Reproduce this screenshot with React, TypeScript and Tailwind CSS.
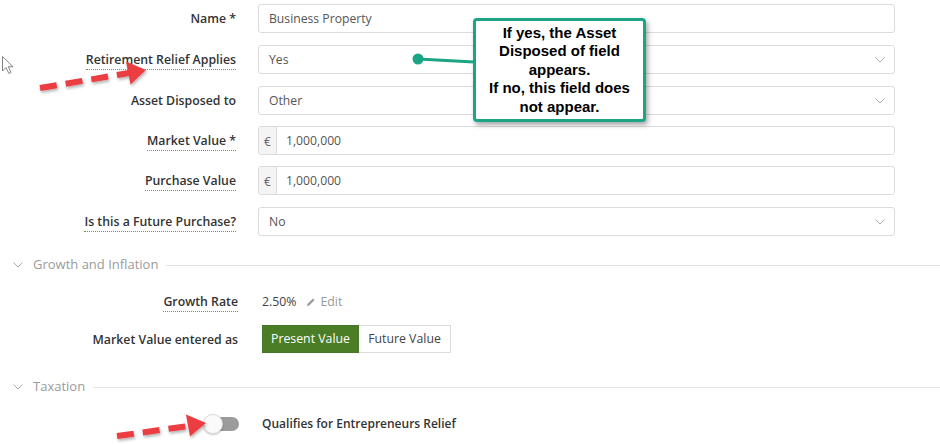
import React from "react";

const Chevron = ({ className = "" }: { className?: string }) => (
  <svg width="10" height="6" viewBox="0 0 10 6" className={className}>
    <path d="M0.5 0.5 L5 5 L9.5 0.5" fill="none" stroke="currentColor" strokeWidth="1" />
  </svg>
);

const Label = ({ text, dotted, w = "w-[236px]" }: { text: string; dotted?: boolean; w?: string }) => (
  <div className={`${w} shrink-0 text-right text-[12.3px] font-semibold text-[#333] pt-[2px]`}>
    <span className={dotted ? "border-b border-dotted border-[#6f9d3c] pb-[1px]" : ""}>{text}</span>
  </div>
);

const TextBox = ({ value }: { value: string }) => (
  <div className="ml-[22px] w-[637px] h-[29px] border border-[#dcdcdc] rounded-[3px] flex items-center px-[10px] pt-[2px] text-[12.2px] text-[#555]">
    {value}
  </div>
);

const SelectBox = ({ value }: { value: string }) => (
  <div className="ml-[22px] w-[637px] h-[29px] border border-[#dcdcdc] rounded-[3px] flex items-center justify-between pl-[10px] pr-[9px] text-[12.2px] text-[#555]">
    <span className="pt-[2px]">{value}</span>
    <Chevron className="text-[#aaa]" />
  </div>
);

const Money = ({ value }: { value: string }) => (
  <div className="ml-[22px] w-[637px] h-[29px] border border-[#dcdcdc] rounded-[3px] flex items-stretch text-[12.2px] text-[#555] overflow-hidden">
    <div className="w-[18px] bg-[#f4f4f4] border-r border-[#dcdcdc] flex items-center justify-center text-[12px] text-[#666] pt-[2px]">€</div>
    <div className="flex items-center pl-[9px] pt-[2px]">{value}</div>
  </div>
);

const Section = ({ title, cls }: { title: string; cls: string }) => (
  <div className={`flex items-center h-[20px] pl-[13px] ${cls}`}>
    <Chevron className="text-[#aaa]" />
    <span className="ml-[10px] text-[13px] text-[#9b9b9b]">{title}</span>
    <div className="flex-1 ml-[8px] h-px bg-[#e2e2e2]" />
  </div>
);

export default function App() {
  return (
    <div
      className="relative w-[940px] h-[445px] bg-white overflow-hidden"
      style={{ fontFamily: '"Open Sans", sans-serif' }}
    >
      <div className="flex flex-col">
        <div className="flex items-center h-[29px] mt-[4px]">
          <Label text="Name *" />
          <TextBox value="Business Property" />
        </div>
        <div className="flex items-center h-[29px] mt-[12px]">
          <Label text="Retirement Relief Applies" dotted />
          <SelectBox value="Yes" />
        </div>
        <div className="flex items-center h-[29px] mt-[12px]">
          <Label text="Asset Disposed to" />
          <SelectBox value="Other" />
        </div>
        <div className="flex items-center h-[29px] mt-[11px]">
          <Label text="Market Value *" dotted />
          <Money value="1,000,000" />
        </div>
        <div className="flex items-center h-[29px] mt-[11px]">
          <Label text="Purchase Value" dotted />
          <Money value="1,000,000" />
        </div>
        <div className="flex items-center h-[29px] mt-[12px]">
          <Label text="Is this a Future Purchase?" dotted />
          <SelectBox value="No" />
        </div>

        <Section title="Growth and Inflation" cls="mt-[19px]" />

        <div className="flex items-center h-[20px] mt-[16px]">
          <Label text="Growth Rate" dotted w="w-[238px]" />
          <div className="ml-[24px] flex items-center text-[12.3px] text-[#444] pt-[2px]">
            <span>2.50%</span>
            <svg width="10" height="10" viewBox="0 0 10 10" className="ml-[9px]">
              <path d="M1 9 L1.6 6.8 L7 1.4 L8.6 3 L3.2 8.4 Z" fill="#999" />
            </svg>
            <span className="ml-[5px] text-[#9a9a9a]">Edit</span>
          </div>
        </div>

        <div className="flex items-center h-[28px] mt-[14px]">
          <Label text="Market Value entered as" w="w-[238px]" />
          <div className="ml-[24px] flex h-[28px] text-[12.3px]">
            <div className="w-[97px] bg-[#4b7d26] border border-[#46772a] text-white flex items-center justify-center pt-[1px]">
              Present Value
            </div>
            <div className="w-[92px] bg-white border border-l-0 border-[#dcdcdc] text-[#444] flex items-center justify-center pt-[1px]">
              Future Value
            </div>
          </div>
        </div>

        <Section title="Taxation" cls="mt-[24px]" />

        <div className="flex items-center h-[22px] mt-[16px]">
          <div className="w-[239px] shrink-0 flex justify-end">
            <div className="relative w-[36px] h-[20px]">
              <div className="absolute left-[6px] right-0 top-[3px] h-[14px] rounded-full bg-[#9c9c9c]" />
              <div className="absolute left-0 top-0 w-[20px] h-[20px] rounded-full bg-[#fafafa] border border-[#dedede] shadow-[0_1px_2px_rgba(0,0,0,0.25)]" />
            </div>
          </div>
          <span className="ml-[23px] text-[12px] font-semibold text-[#333]">Qualifies for Entrepreneurs Relief</span>
        </div>
      </div>

      {/* callout */}
      <div
        className="absolute left-[473px] top-[18px] w-[173px] h-[104px] border-[3px] border-[#1ba584] rounded-[4px] bg-white shadow-[2px_3px_5px_rgba(0,0,0,0.35)] flex flex-col items-center justify-center text-center text-[15px] font-bold leading-[18.5px] text-black"
        style={{ fontFamily: '"Liberation Sans", Arial, sans-serif' }}
      >
        <div>If yes, the Asset</div>
        <div>Disposed of field</div>
        <div>appears.</div>
        <div>If no, this field does</div>
        <div>not appear.</div>
      </div>

      <svg className="absolute inset-0 pointer-events-none" width="940" height="445" viewBox="0 0 940 445">
        <defs>
          <filter id="sh" x="-20%" y="-50%" width="140%" height="200%">
            <feDropShadow dx="1" dy="2" stdDeviation="1.5" floodColor="#000" floodOpacity="0.3" />
          </filter>
        </defs>
        {/* callout connector */}
        <line x1="418" y1="59" x2="474" y2="62" stroke="#1ba584" strokeWidth="3" />
        <circle cx="418" cy="59" r="5.5" fill="#1ba584" />

        {/* arrow 1 */}
        <g filter="url(#sh)">
          <line x1="40" y1="88" x2="129" y2="73" stroke="#ec3c42" strokeWidth="6" strokeDasharray="17 9" />
          <polygon points="146,70 126,61.5 130.5,84.5" fill="#ec3c42" />
        </g>
        {/* arrow 2 */}
        <g filter="url(#sh)">
          <line x1="117" y1="436" x2="189" y2="426" stroke="#ec3c42" strokeWidth="6" strokeDasharray="17 9" />
          <polygon points="206,423 186,414.5 190,436.5" fill="#ec3c42" />
        </g>

        {/* mouse cursor */}
        <path
          d="M2.5 56.5 L2.5 71 L6 67.5 L8.8 73.5 L11 72.5 L8.3 66.7 L13 66.7 Z"
          fill="#fff"
          stroke="#777"
          strokeWidth="0.9"
          strokeLinejoin="round"
        />
      </svg>
    </div>
  );
}
